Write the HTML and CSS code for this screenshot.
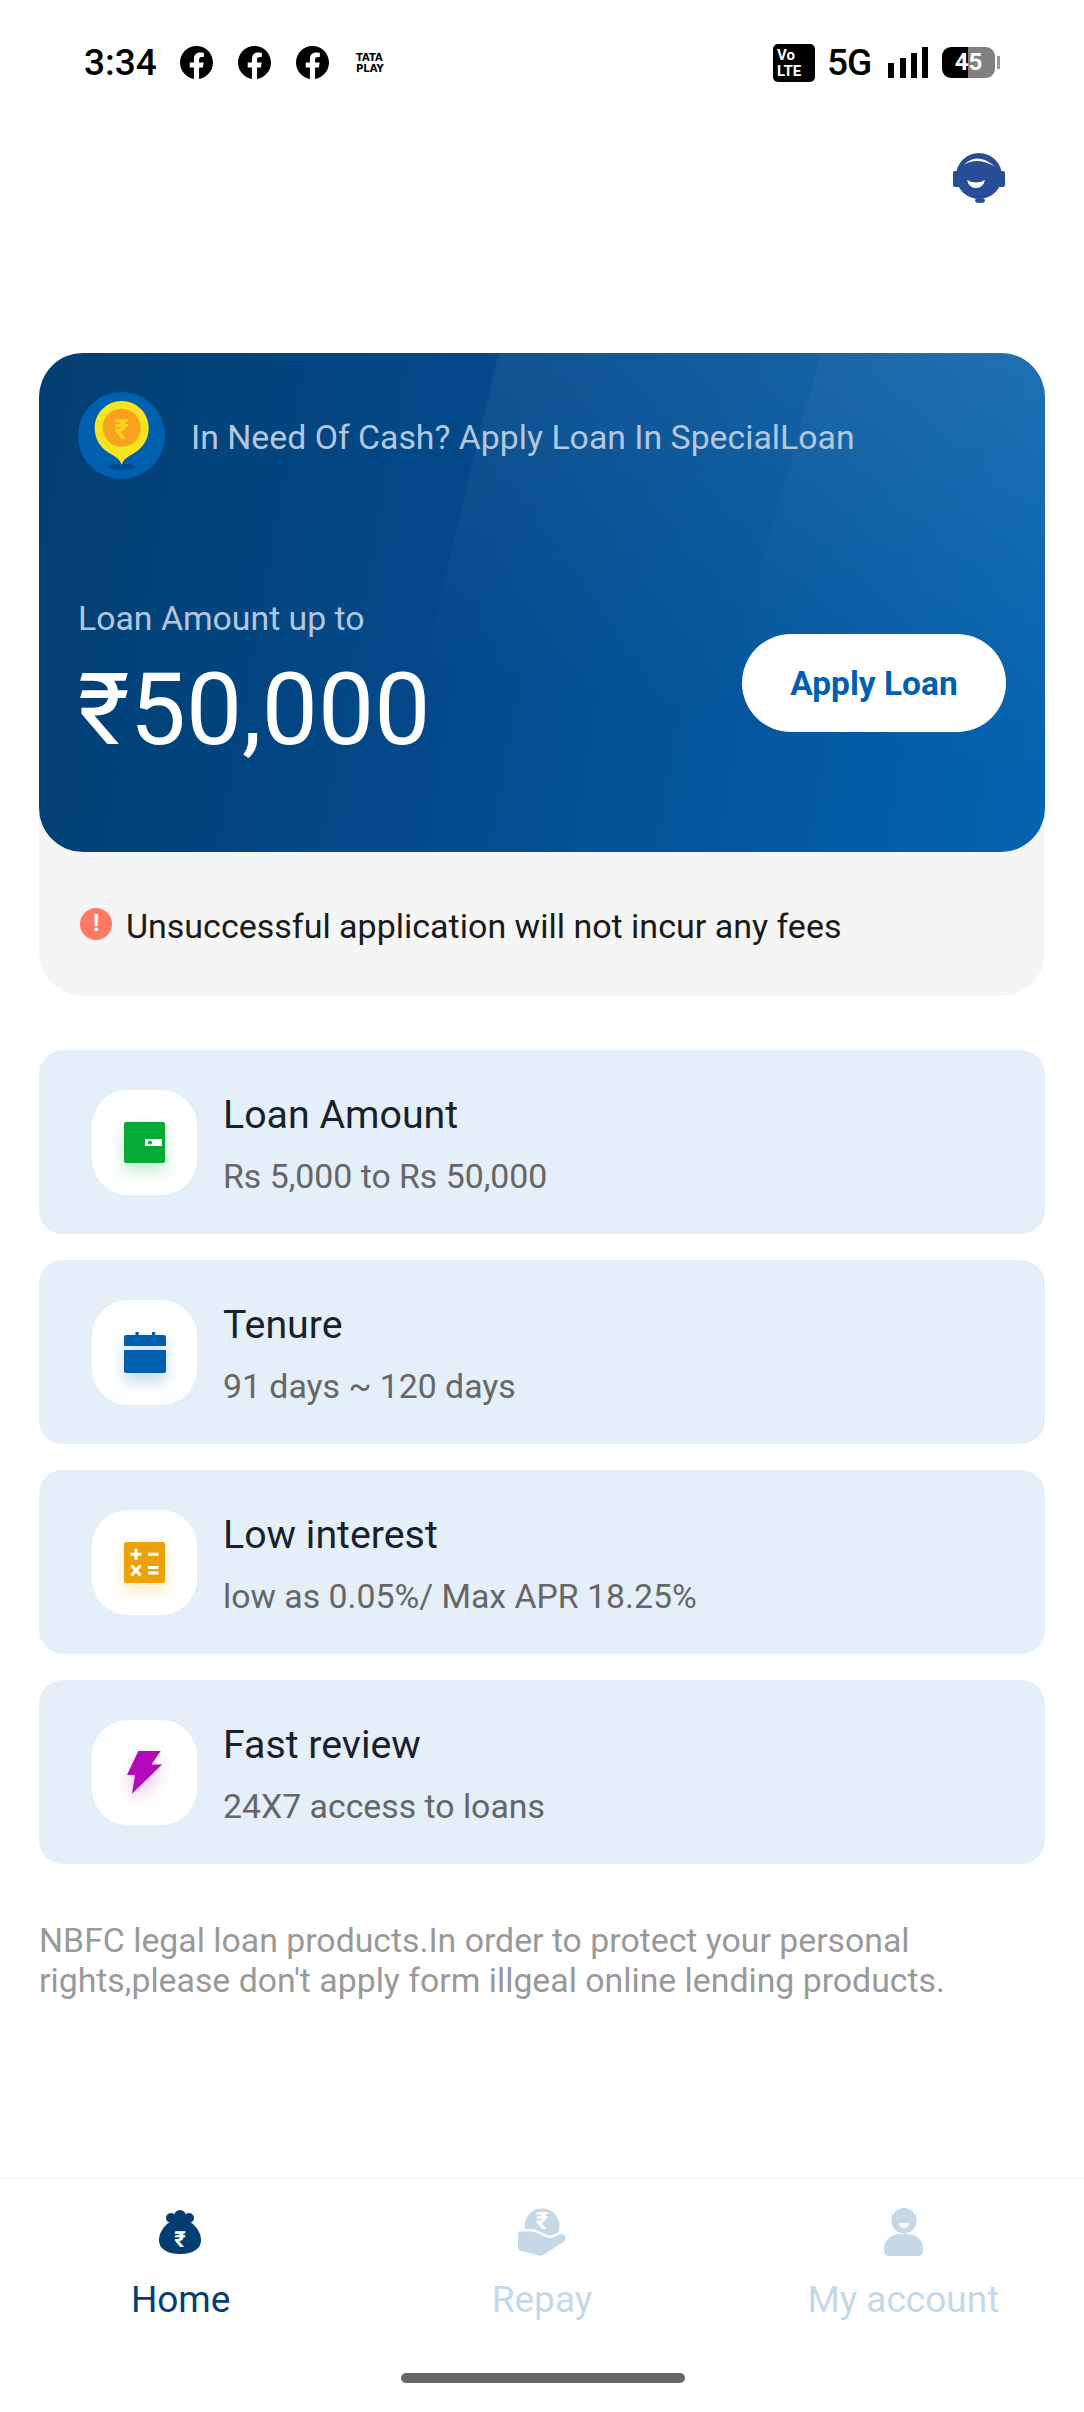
FILE: index.html
```html
<!DOCTYPE html>
<html lang="en">
<head>
  <meta charset="UTF-8" />
  <meta name="viewport" content="width=device-width, initial-scale=1.0"/>
  <title>SpecialLoan</title>
  <link rel="stylesheet" href="styles.css">
</head>
<body>
  <svg class="defs" width="0" height="0">
    <symbol id="fb" viewBox="0 0 24 24">
      <path d="M24 12.07C24 5.4 18.63 0 12 0S0 5.4 0 12.07c0 6.03 4.39 11.02 10.13 11.93v-8.44H7.08v-3.49h3.05V9.41c0-3.02 1.79-4.69 4.53-4.69 1.31 0 2.69.24 2.69.24v2.97h-1.52c-1.49 0-1.96.93-1.96 1.89v2.25h3.33l-.53 3.49h-2.8V24C19.61 23.09 24 18.1 24 12.07z"/>
    </symbol>
  </svg>

  <div class="page">
    <!-- Status bar -->
    <div class="status">
      <div class="status-left">
        <span class="time">3:34</span>
        <svg class="fb"><use href="#fb"/></svg>
        <svg class="fb"><use href="#fb"/></svg>
        <svg class="fb"><use href="#fb"/></svg>
        <span class="tata">TATA<br>PLAY</span>
      </div>
      <div class="status-right">
        <span class="volte">Vo<br>LTE</span>
        <span class="net">5G</span>
        <svg class="signal" width="40" height="31" viewBox="0 0 40 31">
          <rect x="0" y="16" width="6" height="15"/>
          <rect x="12" y="11" width="6" height="20"/>
          <rect x="23" y="6" width="6" height="25"/>
          <rect x="34" y="0" width="6" height="31"/>
        </svg>
        <span class="battery">45</span>
      </div>
    </div>

    <div class="top">
      <svg class="headset" width="52" height="52" viewBox="0 0 52 52">
        <circle cx="26" cy="24" r="23" fill="#264d96"/>
        <rect x="0" y="19" width="8" height="16" rx="2" fill="#264d96"/>
        <rect x="44" y="19" width="8" height="16" rx="2" fill="#264d96"/>
        <ellipse cx="27" cy="48.500" rx="5" ry="2.500" fill="#264d96"/>
        <path d="M10.700 13Q24-1 42.300 14.700Q24 4 10.700 13z" fill="#fff"/>
        <path d="M14 28Q23 33 32 28Q30 36 23 36Q16 36 14 28z" fill="#fff"/>
      </svg>
    </div>

    <main class="content">
      <section class="offer">
        <div class="hero">
          <div class="hero-head">
            <svg class="logo" width="87" height="87" viewBox="0 0 87 87">
              <circle cx="43.500" cy="43.500" r="43.500" fill="#0060b0"/>
              <ellipse cx="43.700" cy="75" rx="14" ry="3.300" fill="#02488c"/>
              <path d="M43.700 73c-2-7-8-9-14-13-8-5-13-14-13-24 0-15 12-27 27-27s27 12 27 27c0 10-5 19-13 24-6 4-12 6-14 13z" fill="#f7e31f"/>
              <circle cx="43.700" cy="35.700" r="19" fill="#f7a11f"/>
              <text x="43.700" y="47" class="logo-rupee">₹</text>
            </svg>
            <span class="hero-title">In Need Of Cash? Apply Loan In SpecialLoan</span>
          </div>
          <div class="hero-body">
            <div>
              <div class="hero-label">Loan Amount up to</div>
              <div class="hero-amount">₹50,000</div>
            </div>
            <button class="apply">Apply Loan</button>
          </div>
        </div>
        <div class="notice">
          <span class="notice-icon">!</span>
          <span class="notice-text">Unsuccessful application will not incur any fees</span>
        </div>
      </section>

      <section class="features">
        <div class="feature">
          <div class="tile">
            <svg class="ico ico-green" width="41" height="41" viewBox="0 0 41 41">
              <rect width="41" height="41" rx="2" fill="#04ac37"/>
              <rect x="21" y="17" width="17" height="7" fill="#fff"/>
              <circle cx="26" cy="20.500" r="2" fill="#04ac37"/>
            </svg>
          </div>
          <div class="feature-text">
            <div class="feature-title">Loan Amount</div>
            <div class="feature-sub">Rs 5,000 to Rs 50,000</div>
          </div>
        </div>
        <div class="feature">
          <div class="tile">
            <svg class="ico ico-blue" width="42" height="41" viewBox="0 0 42 41">
              <rect x="11.500" y="0" width="3.200" height="6" fill="#0060b0"/>
              <rect x="28" y="0" width="3.200" height="6" fill="#0060b0"/>
              <path d="M2 3h38q2 0 2 2v9H0V5q0-2 2-2z" fill="#0060b0"/>
              <path d="M0 18h42v21q0 2-2 2H2q-2 0-2-2z" fill="#0060b0"/>
            </svg>
          </div>
          <div class="feature-text">
            <div class="feature-title">Tenure</div>
            <div class="feature-sub">91 days ~ 120 days</div>
          </div>
        </div>
        <div class="feature">
          <div class="tile">
            <svg class="ico ico-amber" width="41" height="41" viewBox="0 0 41 41">
              <rect width="41" height="41" rx="2" fill="#eba208"/>
              <path d="M6.500 12.300h11M12 6.800v11M24 12.300h10.500M24 25.500h10.500M24 31h10.500M7.500 23.500l9 10M16.500 23.500l-9 10" stroke="#fff" stroke-width="3" fill="none"/>
            </svg>
          </div>
          <div class="feature-text">
            <div class="feature-title">Low interest</div>
            <div class="feature-sub">low as 0.05%/ Max APR 18.25%</div>
          </div>
        </div>
        <div class="feature">
          <div class="tile">
            <svg class="ico ico-purple" width="35" height="43" viewBox="0 0 35 43">
              <path d="M11.300 0H33.700L24.500 13.500H35L5 42.700L8 24H0z" fill="#b209bd"/>
            </svg>
          </div>
          <div class="feature-text">
            <div class="feature-title">Fast review</div>
            <div class="feature-sub">24X7 access to loans</div>
          </div>
        </div>
      </section>

      <p class="legal">NBFC legal loan products.In order to protect your personal rights,please don't apply form illgeal online lending products.</p>
    </main>

    <!-- Bottom nav -->
    <nav class="nav">
      <div class="tab active">
        <svg width="43" height="48" viewBox="0 -2 43 48">
          <circle cx="21" cy="6" r="6" fill="currentColor"/>
          <circle cx="12" cy="8" r="5" fill="currentColor"/>
          <circle cx="30" cy="8" r="5" fill="currentColor"/>
          <path d="M21 9C32 9 42 20 42 30C42 40 32 44 21 44C10 44 0 40 0 30C0 20 10 9 21 9z" fill="currentColor"/>
          <text x="21" y="37" class="nav-rupee">₹</text>
        </svg>
        <span>Home</span>
      </div>
      <div class="tab">
        <svg width="48" height="48" viewBox="0 0 48 48">
          <circle cx="24" cy="18" r="17.500" fill="currentColor"/>
          <text x="24" y="21" class="nav-rupee small">₹</text>
          <path class="hand" d="M0 26Q0 23.500 3 23.500L14 23.500C20 24 26 30 33 30C36 30 40 26 44 26C47 26 48.500 30 47 33L25 47Q22 48.500 19 47L3 43Q0 42 0 40z" fill="currentColor"/>
        </svg>
        <span>Repay</span>
      </div>
      <div class="tab">
        <svg width="39" height="48" viewBox="0 0 39 48">
          <circle cx="20" cy="12.700" r="12.700" fill="currentColor"/>
          <path d="M15.300 15h9.400c0 3-2 5-4.700 5s-4.700-2-4.700-5z" fill="#fff"/>
          <path d="M0 40C0 32 8 26 16 26h7C31 26 39 32 39 40v3q0 5-5 5H5q-5 0-5-5z" fill="currentColor"/>
        </svg>
        <span>My account</span>
      </div>
      <div class="home-bar"></div>
    </nav>
  </div>
</body>
</html>
```

FILE: styles.css
```css
* {
  margin: 0;
  padding: 0;
  box-sizing: border-box;
  font-family: Roboto, "Noto Sans", sans-serif;
}

body {
  background: #fff;
  color: #1a1f2b;
}

.defs {
  display: block;
  height: 0;
}

.page {
  width: 1084px;
  height: 2412px;
  display: flex;
  flex-direction: column;
  overflow: hidden;
}

/* Status bar */
.status {
  height: 125px;
  padding: 0 89px 0 84px;
  display: flex;
  justify-content: space-between;
  align-items: center;
  color: #000;
}

.status-left {
  display: flex;
  align-items: center;
}

.time {
  font-size: 37px;
  font-weight: 500;
  width: 96px;
}

.fb {
  width: 33px;
  height: 33px;
  margin-right: 25px;
}

.tata {
  font-family: "DejaVu Sans", sans-serif;
  font-size: 10px;
  line-height: 11px;
  font-weight: 700;
  margin-left: 2px;
}

.status-right {
  display: flex;
  align-items: center;
}

.volte {
  width: 42px;
  height: 38px;
  background: #000;
  color: #fff;
  border-radius: 5px;
  font-size: 15px;
  line-height: 16px;
  font-weight: 700;
  padding: 3px 0 0 4px;
}

.net {
  width: 43px;
  margin: 0 18px 0 12px;
  font-size: 37px;
  font-weight: 500;
  letter-spacing: -1px;
  text-align: center;
}

.battery {
  width: 53px;
  height: 31px;
  margin-left: 14px;
  border-radius: 9px;
  background: linear-gradient(90deg, #000 50%, #808080 50%);
  color: #fff;
  font-size: 24px;
  font-weight: 700;
  line-height: 31px;
  text-align: center;
  position: relative;
}

.battery::after {
  content: "";
  position: absolute;
  right: -5px;
  top: 9px;
  width: 3px;
  height: 13px;
  background: #999;
}

.top {
  height: 103px;
  padding: 27px 79px 0 0;
  display: flex;
  justify-content: flex-end;
  align-items: flex-start;
}

.content {
  padding: 125px 39px 0;
}

/* Offer card */
.offer {
  background: #f5f5f5;
  border-radius: 44px;
}

.hero {
  height: 499px;
  padding: 39px;
  border-radius: 44px;
  background: linear-gradient(100deg, #023e71 0%, #03498a 40%, #0563b0 100%);
  position: relative;
  overflow: hidden;
  color: #fff;
}

.hero::before,
.hero::after {
  content: "";
  position: absolute;
  top: 0;
  bottom: 0;
  right: 0;
  pointer-events: none;
}

.hero::before {
  left: 340px;
  clip-path: polygon(18% 0, 100% 0, 100% 100%, 0 100%);
  background: linear-gradient(190deg, rgba(255, 255, 255, 0.07), rgba(255, 255, 255, 0) 70%);
}

.hero::after {
  left: 640px;
  clip-path: polygon(39% 0, 100% 0, 100% 100%, 0 100%);
  background: linear-gradient(190deg, rgba(255, 255, 255, 0.04), rgba(255, 255, 255, 0) 65%);
}

.hero-head,
.hero-body {
  position: relative;
  z-index: 1;
}

.hero-head {
  display: flex;
  align-items: center;
  gap: 26px;
}

.hero-title {
  font-size: 33.800px;
  padding-top: 3px;
  color: #b3c8de;
}

.logo-rupee {
  font-size: 28px;
  font-weight: 700;
  fill: #ffd21f;
  text-anchor: middle;
}

.hero-body {
  margin-top: 117.500px;
  display: flex;
  justify-content: space-between;
  align-items: center;
}

.hero-label {
  font-size: 33.800px;
  line-height: 40px;
  padding-top: 2px;
  box-sizing: content-box;
  color: #b3c8de;
}

.hero-amount {
  font-size: 100px;
  line-height: 120px;
  margin-top: 11px;
}

.apply {
  width: 264px;
  height: 98px;
  border: none;
  border-radius: 49px;
  background: #fff;
  color: #0060b0;
  font-size: 33.500px;
  font-weight: 700;
}

.notice {
  height: 144px;
  padding-left: 41px;
  display: flex;
  align-items: center;
  gap: 14px;
  font-size: 34px;
  color: #1a1a1a;
}

.notice-text {
  padding-top: 3px;
}

.notice-icon {
  width: 32px;
  height: 32px;
  border-radius: 50%;
  background: #ff7a63;
  color: #fff;
  font-size: 23px;
  font-weight: 700;
  line-height: 32px;
  text-align: center;
}

/* Feature rows */
.features {
  margin-top: 54px;
  display: flex;
  flex-direction: column;
  gap: 26px;
}

.feature {
  height: 184px;
  padding-left: 53px;
  display: flex;
  align-items: center;
  gap: 26px;
  background: #e4eff9;
  border-radius: 24px;
}

.tile {
  width: 105px;
  height: 105px;
  background: #fff;
  border-radius: 36px;
  display: flex;
  justify-content: center;
  align-items: center;
}

.ico-green { filter: drop-shadow(0 8px 8px rgba(4, 172, 55, 0.25)); }
.ico-blue { filter: drop-shadow(0 8px 8px rgba(0, 96, 176, 0.25)); }
.ico-amber { filter: drop-shadow(0 8px 8px rgba(235, 162, 8, 0.25)); }
.ico-purple { filter: drop-shadow(0 8px 8px rgba(178, 9, 189, 0.25)); }

.feature-text {
  padding-top: 5px;
}

.feature-title {
  font-size: 39.300px;
  line-height: 44px;
}

.feature-sub {
  font-size: 33.800px;
  line-height: 40px;
  margin-top: 20px;
  color: #666;
}

.legal {
  margin-top: 57px;
  font-size: 33.800px;
  line-height: 40px;
  color: #999;
}

/* Bottom nav */
.nav {
  margin-top: auto;
  height: 234px;
  border-top: 1px solid #f4f4f4;
  display: grid;
  grid-template-columns: repeat(3, 1fr);
  position: relative;
}

.tab {
  height: 114px;
  margin-top: 29px;
  display: flex;
  flex-direction: column;
  align-items: center;
  justify-content: space-between;
  color: #c5d8e8;
  font-size: 37px;
}

.tab span {
  line-height: 44px;
}

.tab.active {
  color: #023e71;
}

.hand {
  stroke: #fff;
  stroke-width: 5px;
  paint-order: stroke;
}

.nav-rupee {
  font-size: 22px;
  font-weight: 700;
  fill: #fff;
  text-anchor: middle;
}

.nav-rupee.small {
  font-size: 24px;
}

.home-bar {
  position: absolute;
  left: 401px;
  bottom: 29px;
  width: 284px;
  height: 10px;
  border-radius: 5px;
  background: #666;
}
```
